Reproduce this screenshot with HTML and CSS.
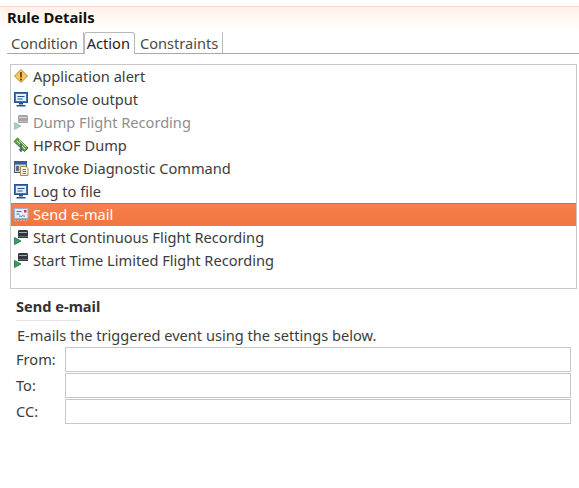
FILE: index.html
```html
<!DOCTYPE html>
<html lang="en">
<head>
    <meta charset="UTF-8">
    <title>Rule Details</title>
    <link rel="stylesheet" href="styles.css">
</head>
<body>
    <svg class="defs" width="0" height="0">
        <symbol id="i-alert" viewBox="0 0 16 16">
            <path d="M8 1.500 14.500 8 8 14.500 1.500 8Z" fill="#f5c860" stroke="#b98a2c"/>
            <rect x="7" y="4" width="2" height="5.500" fill="#8a4a10"/>
            <rect x="7" y="10.500" width="2" height="2" fill="#8a4a10"/>
        </symbol>
        <symbol id="i-screen" viewBox="0 0 16 16">
            <rect x="1.500" y="1.500" width="13" height="10" fill="#e8eef6" stroke="#24548f"/>
            <rect x="2.500" y="2.500" width="11" height="8" fill="none" stroke="#3f78b8"/>
            <path d="M4.500 5.500h7M4.500 8h5" stroke="#24548f"/>
            <path d="M6 12h4v1.500H6zM3.500 14h9v1.500h-9z" fill="#24548f"/>
        </symbol>
        <symbol id="i-record" viewBox="0 0 16 16">
            <path d="M5 9V2l1-1h8l1 1v7Z" fill="#33373c"/>
            <rect x="6" y="3" width="8" height="1" fill="#a8acb0"/>
            <rect x="5" y="7" width="10" height="1" fill="#6d7176"/>
            <path d="M1.500 8.500 8 12 1.500 15.500Z" fill="#35a060" stroke="#1d7040" stroke-width=".8"/>
        </symbol>
        <symbol id="i-heap" viewBox="0 0 16 16">
            <path d="M1 4.500 4.500 1 15 11 11.500 14.500Z" fill="#62a84a" stroke="#33702c"/>
            <path d="M4 4 12 12M6 3 13 10" stroke="#d8e89a"/>
            <path d="M8 6.500v6" stroke="#5a6a80" stroke-width="2"/>
            <path d="M5.500 12h5L8 15.500Z" fill="#5a6a80"/>
        </symbol>
        <symbol id="i-command" viewBox="0 0 16 16">
            <rect x="1.500" y="1.500" width="12" height="11" fill="#cfd6de" stroke="#4a5a70"/>
            <rect x="2" y="2" width="11" height="2.500" fill="#2f5f98"/>
            <rect x="3" y="6" width="3" height="5" fill="#5f6f82"/>
            <path d="M7.500 6.500h5.500l2 2v7h-7.500Z" fill="#fbf6e6" stroke="#b08a3e"/>
            <path d="M9.500 9.500h3.500M9.500 11.500h3.500M9.500 13.500h3.500" stroke="#6a7a8e"/>
        </symbol>
        <symbol id="i-mail" viewBox="0 0 16 16">
            <rect x="1.500" y="2.500" width="13.500" height="10" fill="#e4edf6" stroke="#9fb4cc"/>
            <rect x="11" y="4" width="2.500" height="2.500" fill="#d33a3a"/>
            <path d="M3.500 5.500h5M3.500 8h3M6 10.500c1-1.500 2 .8 3-.4s1.500.4 3 0" stroke="#55718f" fill="none"/>
            <path d="M1 14.500h13" stroke="#c9b8a8" stroke-dasharray="2 1"/>
        </symbol>
    </svg>

    <div class="panel">
        <h1 class="panel-title">Rule Details</h1>

        <div class="tabs">
            <div class="tab">Condition</div>
            <div class="tab active">Action</div>
            <div class="tab">Constraints</div>
        </div>

        <ul class="action-list">
            <li class="action"><svg class="icon"><use href="#i-alert"/></svg>Application alert</li>
            <li class="action"><svg class="icon"><use href="#i-screen"/></svg>Console output</li>
            <li class="action disabled"><svg class="icon"><use href="#i-record"/></svg>Dump Flight Recording</li>
            <li class="action"><svg class="icon"><use href="#i-heap"/></svg>HPROF Dump</li>
            <li class="action"><svg class="icon"><use href="#i-command"/></svg>Invoke Diagnostic Command</li>
            <li class="action"><svg class="icon"><use href="#i-screen"/></svg>Log to file</li>
            <li class="action selected"><svg class="icon"><use href="#i-mail"/></svg>Send e-mail</li>
            <li class="action"><svg class="icon"><use href="#i-record"/></svg>Start Continuous Flight Recording</li>
            <li class="action"><svg class="icon"><use href="#i-record"/></svg>Start Time Limited Flight Recording</li>
        </ul>

        <div class="details">
            <h2 class="details-title">Send e-mail</h2>
            <p class="details-text">E-mails the triggered event using the settings below.</p>
            <div class="form-row">
                <label for="from-input">From:</label>
                <input type="text" id="from-input">
            </div>
            <div class="form-row">
                <label for="to-input">To:</label>
                <input type="text" id="to-input">
            </div>
            <div class="form-row">
                <label for="cc-input">CC:</label>
                <input type="text" id="cc-input">
            </div>
        </div>
    </div>
</body>
</html>
```

FILE: styles.css
```css
body {
    margin: 0;
    background-color: #fff;
    color: #3c3c3c;
    font-family: 'Noto Sans', sans-serif;
    font-size: 14.6px;
}
.defs {
    position: absolute;
}
.panel {
    padding-top: 6px;
}
.panel-title {
    height: 24px;
    margin: 0;
    padding-left: 7px;
    border-top: 1px solid #fdd7c4;
    background: linear-gradient(#fff2ea, #fff);
    color: #111;
    font-size: 14.8px;
    font-weight: bold;
    line-height: 20px;
}
.tabs {
    display: flex;
    height: 21px;
    margin-left: 7px;
    margin-top: 1px;
    padding-left: 1px;
    border-bottom: 1px solid #a9a9a9;
}
.tab {
    padding: 0 4px 0 5px;
    border-right: 1px solid #bdbdbd;
    color: #4a4a4a;
    line-height: 23px;
}
.tab:first-child {
    padding: 0 5px 0 3px;
}
.tab.active {
    height: 21px;
    border: 1px solid #b8b8b8;
    border-bottom: none;
    border-radius: 3px 3px 0 0;
    padding: 0 4px 0 2px;
    background-color: #fff;
    color: #222;
    line-height: 21px;
}
.action-list {
    height: 223px;
    margin: 10px 2px 0 10px;
    padding: 0;
    border: 1px solid #c8c8c8;
    list-style: none;
}
.action {
    display: flex;
    align-items: center;
    height: 23px;
    padding-bottom: 2px;
    box-sizing: border-box;
}
.icon {
    width: 16px;
    height: 16px;
    margin: 0 4px 0 2px;
    flex: none;
}
.disabled {
    color: #8e8e8e;
}
.disabled .icon {
    opacity: 0.45;
}
.selected {
    background: linear-gradient(#f6804e, #f07540);
    box-shadow: inset 0 1px #e0683a;
    color: #fff;
}
.details {
    padding: 9px 8px 0 16px;
}
.details-title {
    width: 64px;
    height: 22px;
    margin: 0;
    border-bottom: 1px solid #e6e6e6;
    color: #333;
    font-size: 14.6px;
    font-weight: bold;
    line-height: 16px;
    white-space: nowrap;
}
.details-text {
    margin: 5px 0 0 1px;
    height: 21px;
    line-height: 18px;
}
.form-row {
    display: flex;
    align-items: center;
    height: 25px;
    margin-bottom: 1px;
}
label {
    width: 49px;
    flex: none;
    padding-bottom: 1px;
}
input {
    flex: 1;
    min-width: 0;
    height: 25px;
    padding: 0 4px;
    border: 1px solid #c8c8c8;
    box-sizing: border-box;
    background-color: #fff;
}
```
